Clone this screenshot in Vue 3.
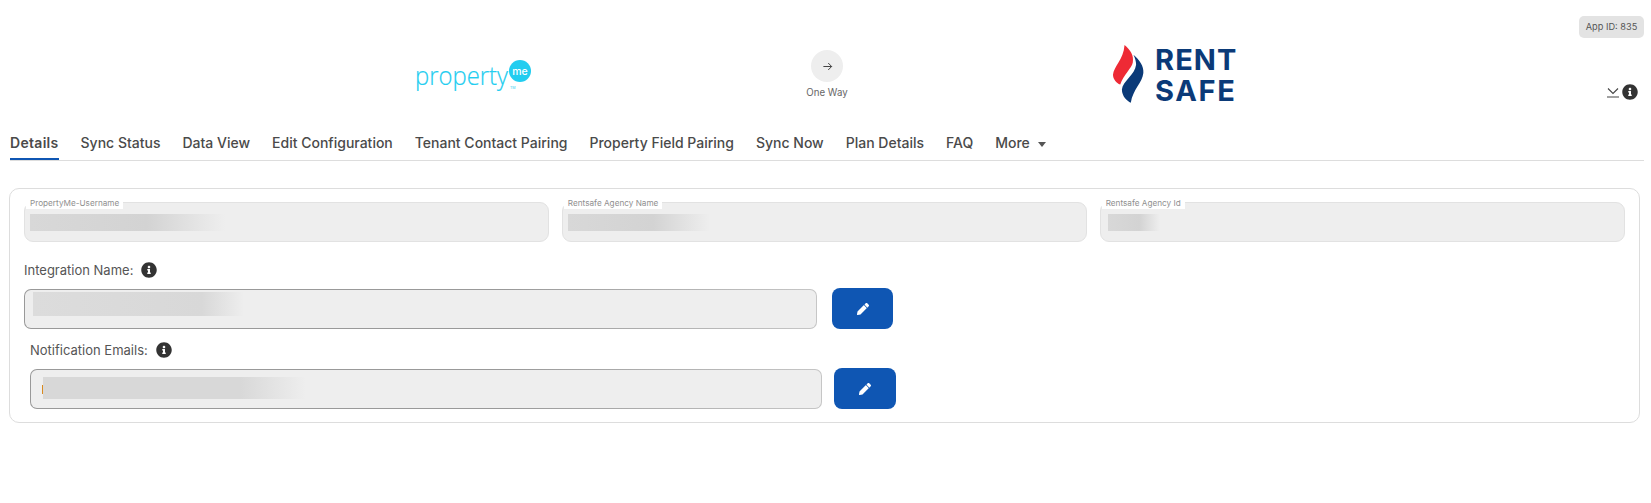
<script setup>
const tabs = ['Details', 'Sync Status', 'Data View', 'Edit Configuration', 'Tenant Contact Pairing', 'Property Field Pairing', 'Sync Now', 'Plan Details', 'FAQ']
const fields = [
  { label: 'PropertyMe-Username', width: 195, left: 5 },
  { label: 'Rentsafe Agency Name', width: 142, left: 5 },
  { label: 'Rentsafe Agency Id', width: 52, left: 7 }
]
const infoPath = 'M256 8C119.043 8 8 119.083 8 256c0 136.997 111.043 248 248 248s248-111.003 248-248C504 119.083 392.957 8 256 8zm0 110c23.196 0 42 18.804 42 42s-18.804 42-42 42-42-18.804-42-42 18.804-42 42-42zm56 254c0 6.627-5.373 12-12 12h-88c-6.627 0-12-5.373-12-12v-24c0-6.627 5.373-12 12-12h12v-64h-12c-6.627 0-12-5.373-12-12v-24c0-6.627 5.373-12 12-12h64c6.627 0 12 5.373 12 12v100h12c6.627 0 12 5.373 12 12v24z'
const pencilPath = 'M497.9 142.1l-46.1 46.1c-4.7 4.7-12.3 4.7-17 0l-111-111c-4.7-4.7-4.7-12.3 0-17l46.1-46.1c18.7-18.7 49.1-18.7 67.9 0l60.1 60.1c18.8 18.7 18.8 49.1 0 67.9zM284.2 99.8L21.6 362.4.4 483.9c-2.9 16.4 11.4 30.6 27.8 27.8l121.5-21.3 262.6-262.6c4.7-4.7 4.7-12.3 0-17l-111-111c-4.8-4.7-12.4-4.7-17.1 0z'
</script>

<template>
  <div class="page">
    <span class="app-id">App ID: 835</span>

    <header class="header">
      <svg class="pm-logo" width="118" height="36" viewBox="0 0 118 36">
        <text x="0" y="25" class="pm-word" textLength="93" lengthAdjust="spacingAndGlyphs">property</text>
        <circle cx="105" cy="11" r="11" fill="#22cdf0" />
        <text x="105" y="14.5" class="pm-me" text-anchor="middle">me</text>
        <text x="95" y="29" class="pm-tm">TM</text>
      </svg>

      <div class="direction">
        <span class="direction-circle">
          <svg width="11" height="11" viewBox="0 0 12 12" fill="none" stroke="#333" stroke-width="1">
            <path d="M1.5 6h9M6.8 2.2 10.5 6l-3.7 3.8" />
          </svg>
        </span>
        <span class="direction-label">One Way</span>
      </div>

      <div class="rs-logo">
        <svg width="33" height="62" viewBox="25 13 100 180">
          <path fill="#ee2a35" d="M63 15C80 30 92 45 88 68 85 85 60 105 50 135 38 130 28 118 28 105 30 80 60 60 63 15Z" />
          <path fill="#0b3a78" d="M90 45C108 60 122 80 120 100 117 130 88 150 82 190 70 185 55 170 55 150 57 125 95 105 98 75 98 65 95 55 90 45Z" />
        </svg>
        <div class="rs-word">
          <span>RENT</span>
          <span class="rs-safe">SAFE</span>
        </div>
      </div>

      <div class="header-icons">
        <svg width="12" height="11" viewBox="0 0 12 11" fill="none" stroke="#444" stroke-width="1.1">
          <path d="M1 1.5 6 6.5l5-5M0 10h12" />
        </svg>
        <svg width="16" height="16" viewBox="0 0 512 512"><path fill="#333" :d="infoPath" /></svg>
      </div>
    </header>

    <nav class="tabs">
      <a v-for="(tab, i) in tabs" :key="tab" class="tab" :class="{ active: i === 0 }">{{ tab }}</a>
      <a class="tab">More <span class="caret"></span></a>
    </nav>

    <section class="card">
      <div class="field-grid">
        <div v-for="f in fields" :key="f.label" class="field">
          <span class="field-label">{{ f.label }}</span>
          <span class="blur" :style="{ width: f.width + 'px', marginLeft: f.left + 'px' }"></span>
        </div>
      </div>

      <div class="group">
        <div class="group-label">
          Integration Name:
          <svg width="16" height="16" viewBox="0 0 512 512"><path fill="#333" :d="infoPath" /></svg>
        </div>
        <div class="group-row">
          <div class="input input-a"><span class="blur blur-a"></span></div>
          <button class="edit" type="button">
            <svg width="12" height="12" viewBox="0 0 512 512"><path fill="#fff" :d="pencilPath" /></svg>
          </button>
        </div>
      </div>

      <div class="group group-b">
        <div class="group-label">
          Notification Emails:
          <svg width="16" height="16" viewBox="0 0 512 512"><path fill="#333" :d="infoPath" /></svg>
        </div>
        <div class="group-row row-b">
          <div class="input input-b"><i class="caret-mark"></i><span class="blur blur-b"></span></div>
          <button class="edit edit-b" type="button">
            <svg width="12" height="12" viewBox="0 0 512 512"><path fill="#fff" :d="pencilPath" /></svg>
          </button>
        </div>
      </div>
    </section>
  </div>
</template>

<style>
html, body { margin: 0; background: #fff; }
</style>

<style scoped>
.page {
  position: relative;
  width: 1651px;
  height: 503px;
  overflow: hidden;
  font-family: Inter, "Liberation Sans", sans-serif;
  color: #444;
  background: #fff;
}
.app-id {
  position: absolute;
  left: 1579px;
  top: 16px;
  width: 65px;
  height: 22px;
  line-height: 22px;
  text-align: center;
  background: #e3e3e3;
  border-radius: 5px;
  font-size: 9.2px;
  color: #555;
}
.header {
  display: flex;
  height: 124px;
  box-sizing: border-box;
  padding-left: 415px;
}
.pm-logo { margin-top: 60px; flex: none; overflow: visible; }
.pm-word { font-family: "Open Sans", sans-serif; font-weight: 300; font-size: 25px; fill: #22cdf0; stroke: #22cdf0; stroke-width: 0.2px; }
.pm-me { font-family: Inter, sans-serif; font-weight: 500; font-size: 10.5px; fill: #fff; }
.pm-tm { font-family: Inter, sans-serif; font-size: 3.5px; fill: #22cdf0; }
.direction {
  flex: none;
  width: 60px;
  margin-left: 264px;
  padding-top: 50px;
  display: flex;
  flex-direction: column;
  align-items: center;
}
.direction-circle {
  width: 32px;
  height: 32px;
  border-radius: 50%;
  background: #eee;
  display: flex;
  align-items: center;
  justify-content: center;
}
.direction-label { margin-top: 4px; font-size: 9.7px; line-height: 14px; color: #666; }
.rs-logo { flex: none; display: flex; margin-left: 255px; padding-top: 43px; height: 62px; }
.rs-word {
  margin-left: 10px;
  padding-top: 2px;
  display: flex;
  flex-direction: column;
  font-family: Inter, sans-serif;
  font-weight: 700;
  font-size: 29px;
  line-height: 30.5px;
  letter-spacing: 1.1px;
  color: #0b3a78;
}
.rs-safe { letter-spacing: 1.7px; }
.header-icons {
  position: absolute;
  left: 1607px;
  top: 84px;
  display: flex;
  align-items: center;
  gap: 3px;
}
.tabs {
  display: flex;
  gap: 22px;
  margin-left: 10px;
  width: 1634px;
  height: 37px;
  box-sizing: border-box;
  border-bottom: 1px solid #ddd;
}
.tab {
  font-size: 14px;
  font-weight: 500;
  line-height: 37px;
  height: 36px;
  color: #4a4a4a;
  white-space: nowrap;
  box-sizing: border-box;
}
.tab.active { font-weight: 600; letter-spacing: 0.3px; border-bottom: 2.5px solid #0f56b3; }
.caret {
  display: inline-block;
  margin-left: 4px;
  vertical-align: 1px;
  border-left: 4.5px solid transparent;
  border-right: 4.5px solid transparent;
  border-top: 5px solid #555;
}
.card {
  width: 1630.5px;
  height: 235px;
  margin: 27px 0 0 9px;
  box-sizing: border-box;
  border: 1px solid #ddd;
  border-radius: 10px;
  padding: 13px 13.5px 13px 14px;
}
.field-grid { display: grid; grid-template-columns: repeat(3, 1fr); gap: 12.5px; }
.field {
  position: relative;
  height: 40px;
  box-sizing: border-box;
  padding-top: 11px;
  background: #eee;
  border: 1px solid #e2e2e2;
  border-radius: 9px;
}
.field-label {
  position: absolute;
  left: 1px;
  top: -6px;
  padding: 0 4px;
  background: #fff;
  font-size: 8.2px;
  line-height: 12px;
  color: #8f8f8f;
}
.blur {
  display: block;
  height: 17px;
  background: linear-gradient(90deg, #d8d8d8 0%, #d3d3d3 60%, #eee 100%);
}
.group { margin-top: 18px; }
.group-b { margin-top: 11px; padding-left: 6px; }
.group-label {
  height: 20px;
  line-height: 20px;
  display: flex;
  align-items: center;
  gap: 8px;
  font-size: 13px;
  color: #555;
}
.group-row {
  display: flex;
  align-items: flex-end;
  gap: 15px;
  margin-top: 8px;
}
.row-b { gap: 12.5px; }
.input {
  height: 40px;
  box-sizing: border-box;
  display: flex;
  border: 1px solid transparent;
  border-radius: 7px;
  background:
    linear-gradient(#eee, #eee) padding-box,
    linear-gradient(90deg, #999 0%, #999 60%, #c6c6c6 100%) border-box;
}
.input-a { width: 793px; padding: 2px 0 0 8px; }
.input-b { width: 791.5px; padding: 7px 0 0 11px; position: relative; }
.blur-a {
  width: 211px;
  height: 24px;
  background: linear-gradient(90deg, #dcdcdc 0%, #d8d8d8 80%, #eee 100%);
}
.blur-b {
  width: 263px;
  height: 22px;
  margin-left: 1px;
  background: linear-gradient(90deg, #d8d8d8 0%, #d8d8d8 75%, #eee 100%);
}
.caret-mark {
  position: absolute;
  left: 11px;
  top: 15px;
  width: 1px;
  height: 9px;
  background: #d98a1f;
}
.edit {
  flex: none;
  width: 61px;
  height: 41px;
  padding: 0;
  border: 0;
  border-radius: 8px;
  background: #0f56b3;
  display: flex;
  align-items: center;
  justify-content: center;
}
.edit-b { width: 62px; }
</style>
